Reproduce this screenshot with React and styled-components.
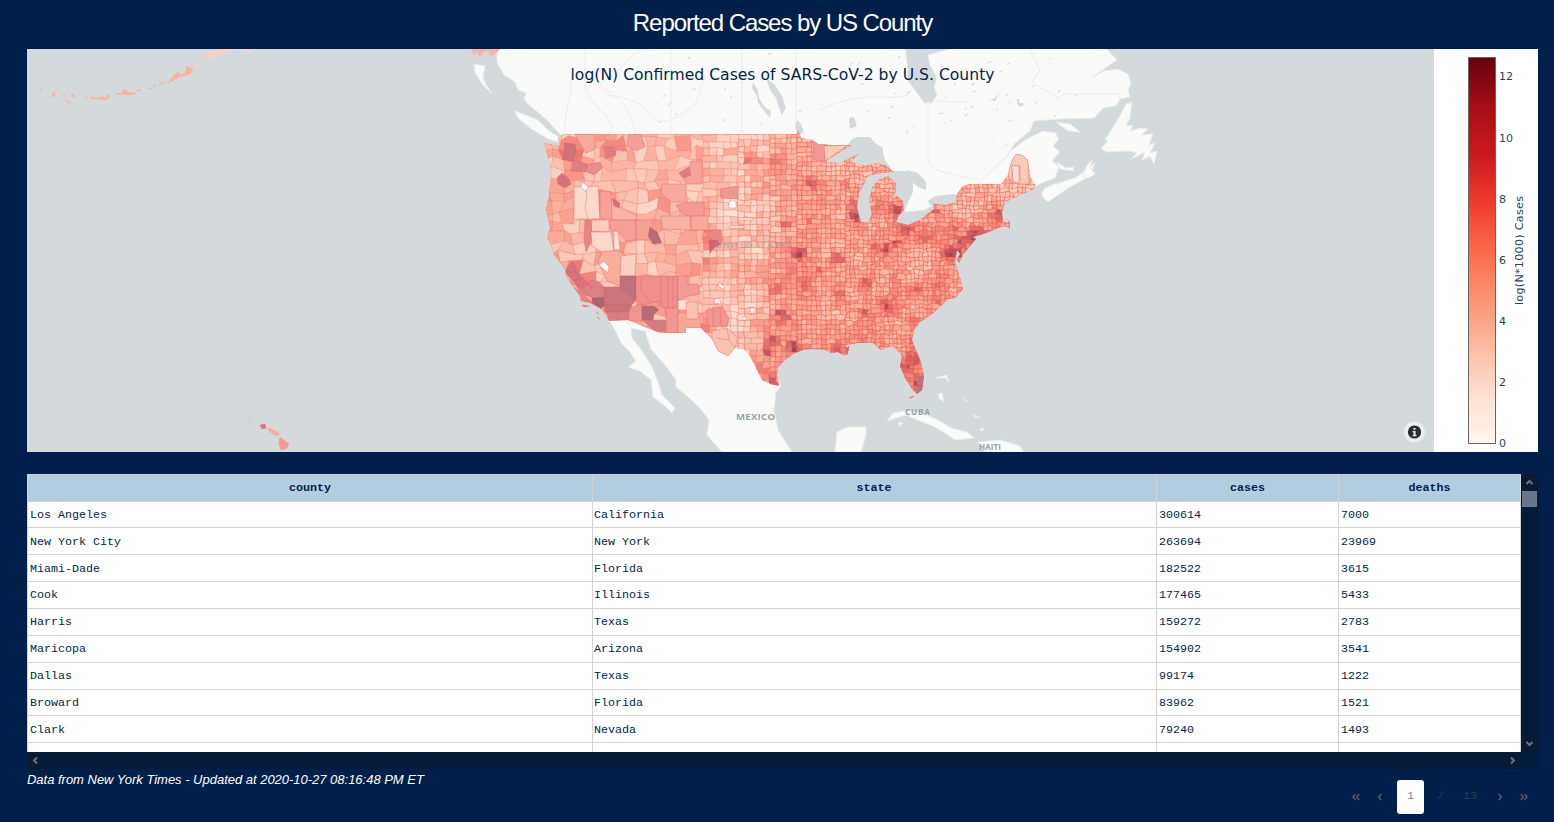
import React from "react";
import styled, { createGlobalStyle } from "styled-components";

const GlobalStyle = createGlobalStyle`
  * { box-sizing: border-box; }
  body { margin: 0; background: #001f4b; overflow: hidden; }
`;

const Page = styled.main`
  display: flex;
  flex-direction: column;
  height: 822px;
  padding: 0 16px 0 27px;
  background: #001f4b;
  color: #fff;
  font-family: "Liberation Sans", Arial, sans-serif;
`;
const Title = styled.h1`
  margin: 0;
  height: 49px;
  line-height: 45px;
  text-align: center;
  font-size: 24px;
  font-weight: 400;
  letter-spacing: -1.07px;
`;
const Chart = styled.section`
  display: flex;
  flex: none;
  height: 403px;
  margin-bottom: 22px;
  background: #fff;
`;
const MapSvg = styled.svg`
  display: block;
  width: 1407px;
  height: 403px;
  background: #d4dadc;
`;
const LegendSvg = styled.svg`
  display: block;
  width: 104px;
  height: 403px;
`;
const ChartText = styled.text`
  font-family: Verdana, "DejaVu Sans", sans-serif;
  font-size: ${(p) => p.$size}px;
  fill: ${(p) => p.$color || "#2a3f5f"};
`;
const PlaceLabel = styled.text`
  font-family: "Open Sans", sans-serif;
  font-weight: 700;
  font-size: ${(p) => p.$size}px;
  fill: #93a1ac;
  opacity: ${(p) => p.$opacity || 1};
`;
const TableArea = styled.section`
  display: grid;
  grid-template-columns: 1494px 17px;
  grid-template-rows: 278px 17px;
  flex: none;
`;
const Table = styled.div`
  overflow: hidden;
  background: #fff;
  color: #001f4b;
  border-right: 1px solid #d3d3d3;
  font-family: "Courier New", "Liberation Mono", monospace;
  font-size: 11.67px;
`;
const Cell = styled.div`
  border-top: 1px solid #d3d3d3;
  border-left: 1px solid #d3d3d3;
  padding: 0 2px;
  white-space: pre;

  &:nth-child(2) {
    padding-left: 1px;
  }
`;
const Row = styled.div`
  display: grid;
  grid-template-columns: 565px 564px 182px 182px;
  height: ${(p) => p.$height}px;
  line-height: ${(p) => p.$line || 27}px;
  background: ${(p) => (p.$head ? "#b3cde0" : "#fff")};
  font-weight: ${(p) => (p.$head ? 700 : 400)};
  text-align: ${(p) => (p.$head ? "center" : "left")};
  overflow: hidden;
`;
const VerticalBar = styled.div`
  display: flex;
  flex-direction: column;
  background: #061a39;
`;
const HorizontalBar = styled.div`
  display: flex;
  justify-content: space-between;
  background: #061a39;
`;
const Corner = styled.div`
  background: #041c40;
`;
const BarButton = styled.div`
  display: flex;
  align-items: center;
  justify-content: center;
  width: 17px;
  height: 17px;
  background: #0a1934;
`;
const Thumb = styled.div`
  height: 16px;
  margin: 0 1px;
  background: #6a768b;
`;
const Spacer = styled.div`
  flex: 1;
`;
const Footer = styled.footer`
  display: flex;
  justify-content: space-between;
  height: 53px;
`;
const Source = styled.em`
  font-size: 13px;
  line-height: 22px;
  letter-spacing: -0.015px;
  white-space: nowrap;
`;
const Pager = styled.nav`
  display: flex;
  align-items: center;
  height: 34px;
  margin: 11px 2px 0 0;
  color: #383c43;
  font-family: "Courier New", "Liberation Mono", monospace;
  font-size: 11.67px;
`;
const PageButton = styled.span`
  display: flex;
  align-items: center;
  justify-content: center;
  width: 24px;
  padding-bottom: 1px;
`;
const CurrentPage = styled.span`
  width: 27px;
  height: 34px;
  margin: 0 5px;
  border-radius: 3px;
  background: #fff;
  color: #858585;
  line-height: 32px;
  text-align: center;
`;
const PageSlash = styled.span`
  width: 23px;
  padding-bottom: 2px;
  text-align: center;
`;
const PageTotal = styled.span`
  width: 36px;
  padding-bottom: 2px;
  text-align: center;
`;

const rows = [
  ["Los Angeles", "California", "300614", "7000"],
  ["New York City", "New York", "263694", "23969"],
  ["Miami-Dade", "Florida", "182522", "3615"],
  ["Cook", "Illinois", "177465", "5433"],
  ["Harris", "Texas", "159272", "2783"],
  ["Maricopa", "Arizona", "154902", "3541"],
  ["Dallas", "Texas", "99174", "1222"],
  ["Broward", "Florida", "83962", "1521"],
  ["Clark", "Nevada", "79240", "1493"],
  ["", "", "", ""],
];
const rowHeights = [26, 27, 27, 27, 27, 27, 27, 26, 27, 27];
const rowLines = [27, 29, 29, 27, 27, 27, 27, 27, 29, 27];

const usOutline =
  "M563 134H797L798 130 801 138 812 140 818 144 832 145 852 145 840 152 825 162 840 163 850 158 858 154 851 162 865 166 875 163 885 165 894 172 881 173 870 175 860 184 855 189 866 180 859 193 857 208 861 222 868 223 872 214 869 200 872 188 878 180 888 176 896 183 896 191 892 199 897 196 903 201 904 210 899 215 896 222 908 225 920 220 934 209 933 204 945 205 956 202 957 194 962 187 969 184 1001 184 1008 175 1011 162 1016 154 1022 155 1028 160 1030 177 1035 185 1034 189 1020 195 1009 200 1004 205 1002 213 1003 222 1009 223 1007 219 1010 222 1010 228 1004 226 996 229 985 232 979 235 973 237 976 239 971 245 967 250 963 255 959 263 957 259 960 254 957 250 955 262 958 272 961 280 963 289 955 298 948 299 943 304 932 314 920 322 914 330 912 340 916 350 921 362 924 376 922 390 917 394 912 389 905 378 900 366 902 357 899 352 893 346 886 348 881 350 873 343 858 343 845 345 849 350 844 356 838 352 831 353 825 350 812 349 803 350 795 353 785 360 778 367 777 376 779 386 771 384 762 380 757 370 750 356 744 349 735 348 728 356 718 351 712 339 701 328H686V333H660L628 320 609 321 605 314 600 308 592 304 581 301 580 296 572 285 567 278 565 270 559 261 554 255 550 243 547 238 550 228 546 210 549 196 551 175 549 160 544 143 560 146 558 138Z";

const land = [
  "M497 40V62L504 75 509 78 515 82 518 90 526 93 524 99 528 104 540 114 548 121 553 127 562 136 600 180H850L895 190 905 212 925 210 934 205 960 202 1010 190 1034 187 1042 183 1055 178 1059 166 1052 161 1060 152 1053 146 1059 139 1056 133 1043 131 1025 140 1012 150 1000 163 1008 155 1015 143 1030 131 1034 121 1060 119 1094 118 1103 108 1116 106 1120 99 1130 97 1128 90 1131 84 1128 74 1117 69 1103 71 1093 77 1105 68 1117 60 1103 45 1101 40H950V49L928 55 930 65 937 78 934 87 937 95 932 103 924 103 915 90 907 80 908 70 905 49V40Z",
  "M474 64L485 66 483 78 487 86 492 94 483 85 475 73Z",
  "M515 111L528 116 538 120 548 130 557 136 562 143 548 139 530 128 518 118Z",
  "M1042 193L1045 188 1055 184 1075 178 1089 168 1095 163 1090 176 1070 187 1058 195 1048 202 1042 196Z",
  "M1057 162L1066 168 1074 167 1073 171 1060 169Z",
  "M1082 177L1087 165 1092 160 1090 168 1095 174 1088 178Z",
  "M1056 122L1070 124 1080 132 1068 131Z",
  "M1132 102L1126 104 1117 121 1105 140 1108 141 1101 148 1106 152 1130 151 1137 153 1131 159 1145 152 1142 160 1150 156 1154 164 1157 151 1150 153 1155 143 1149 145 1153 134 1141 135 1148 129 1141 128 1130 131 1133 125 1126 126 1130 118Z",
  "M609 320L630 318 632 338 640 348 651 365 658 382 662 395 675 408 672 413 664 405 653 397 651 380 640 371 628 367 636 361 630 352 621 343 616 332Z",
  "M626 319L700 320 760 345 781 386 776 392 774 410 778 430 792 452H722L707 435 709 420 700 408 688 397 676 387 676 380 665 365 651 349 645 331 631 328Z",
  "M835 452L837 432 848 427 866 427 866 435 861 452Z",
  "M887 421L893 413 905 411 922 413 938 420 951 428 967 432 974 438 955 440 945 433 933 426 917 420 906 415Z",
  "M978 442L1000 440 1020 446 1024 452H985Z",
  "M938 394L942 393 944 402 939 398Z",
  "M935 378L947 375 949 383 946 378Z",
  "M963 398L968 402 965 400ZM973 414L980 418 975 417ZM979 429L985 428 982 431Z",
  "M898 422L903 423 900 427Z",
];

const lakes = [
  "M822 163L845 148 852 139 858 137 870 137 875 143 883 148 883 152 885 160 891 168 880 178 830 180Z",
  "M852 172H898V200L880 226H856Z",
  "M880 171L905 171 913 180 913 192 908 202 904 212 880 212Z",
  "M906 170L918 173 926 182 926 190 918 187 908 178Z",
  "M894 224L912 215 926 213 934 207 937 214 908 232Z",
  "M928 201L935 196 955 194 961 199 950 207 930 205Z",
  "M766 78L774 84 782 96 786 108 782 115 778 105 776 98 770 90Z",
  "M753 82L758 90 759 98 764 106 771 112 770 118 765 112 758 103 757 96 752 88Z",
  "M797 120L801 124 804 132 799 135 795 127Z",
  "M849 119L854 117 857 126 850 129Z",
  "M989 99L994 99 1000 92 995 101Z",
  "M1017 99L1019 99 1019 103 1023 103 1024 105 1020 107 1017 104Z",
];

const canadaLines =
  "M585 49V75M565 62Q576 70 568 105T571 134M586 70Q580 92 600 110T607 134M598 85L612 93 628 110 636 134M671 49V134M742 49V134M796 49V134M600 84Q620 70 628 60T646 49M607 95Q640 98 650 115T695 105L705 75M820 110Q850 95 880 97T910 91M928 101V160Q932 170 946 173T978 180M978 184L1002 161M936 101L970 102M1030 49L1040 70 1032 82 1058 98 1064 94 1119 94 1120 101";

const fract = (n) => n - Math.floor(n);
const hash = (x, y, k = 0) =>
  fract(Math.sin(x * 127.1 + y * 311.7 + k * 74.7) * 43758.5453);

const metros = [
  [568, 150, 6, 0.4], [580, 165, 8, 0.2], [562, 180, 7, 0.4], [573, 270, 7, 0.35],
  [583, 282, 9, 0.3], [655, 236, 5, 0.5], [714, 242, 8, 0.36], [811, 184, 6, 0.5],
  [857, 216, 7, 0.55], [855, 205, 7, 0.38], [895, 211, 7, 0.48], [976, 235, 8, 0.6],
  [1000, 214, 9, 0.42], [963, 243, 8, 0.38], [950, 253, 8, 0.46], [887, 306, 7, 0.42],
  [920, 384, 9, 0.44], [903, 368, 9, 0.36], [913, 358, 8, 0.34], [911, 341, 5, 0.36],
  [780, 317, 6, 0.5], [794, 348, 6, 0.56], [767, 352, 6, 0.45], [773, 340, 6, 0.4],
  [837, 349, 8, 0.3], [866, 284, 6, 0.36], [917, 292, 7, 0.32], [935, 285, 9, 0.24],
  [835, 257, 6, 0.46], [799, 254, 6, 0.38], [886, 250, 6, 0.4], [897, 242, 5, 0.36],
  [908, 229, 7, 0.28], [873, 245, 5, 0.42], [925, 237, 6, 0.32], [840, 294, 6, 0.4],
  [935, 212, 5, 0.3], [607, 151, 7, 0.42], [613, 201, 6, 0.38], [685, 172, 6, 0.35],
  [701, 328, 7, 0.35], [772, 382, 8, 0.35], [758, 366, 7, 0.35], [750, 160, 6, 0.38],
  [778, 160, 6, 0.34], [858, 342, 8, 0.22], [805, 282, 6, 0.32], [775, 290, 6, 0.3],
  [732, 152, 5, 0.22], [745, 267, 5, 0.3], [841, 278, 10, 0.08], [570, 205, 8, 0.15],
  [786, 223, 5, 0.32], [810, 220, 5, 0.26], [739, 292, 6, 0.25], [708, 264, 6, 0.2],
  [846, 185, 5, 0.24], [876, 208, 5, 0.28], [820, 272, 5, 0.25], [895, 277, 5, 0.28],
  [865, 311, 5, 0.28], [938, 300, 5, 0.24], [955, 230, 6, 0.2], [912, 320, 5, 0.2],
];
const stops = [
  [0, 255, 246, 240], [0.2, 253, 224, 211], [0.35, 252, 202, 184], [0.5, 250, 169, 149],
  [0.65, 242, 136, 125], [0.82, 210, 102, 106], [1, 157, 70, 88],
];
const ramp = (value) => {
  const v = Math.max(0, Math.min(1, value));
  const i = Math.max(1, stops.findIndex((s) => s[0] >= v));
  const a = stops[i - 1];
  const b = stops[i];
  const t = (v - a[0]) / (b[0] - a[0]);
  return `rgb(${[1, 2, 3].map((c) => Math.round(a[c] + (b[c] - a[c]) * t)).join(",")})`;
};
const smooth = (x, y, s) => {
  const ix = Math.floor(x / s);
  const iy = Math.floor(y / s);
  const fx = x / s - ix;
  const fy = y / s - iy;
  const top = hash(ix, iy, 5) * (1 - fx) + hash(ix + 1, iy, 5) * fx;
  const bottom = hash(ix, iy + 1, 5) * (1 - fx) + hash(ix + 1, iy + 1, 5) * fx;
  return top * (1 - fy) + bottom * fy;
};
const clamp01 = (n) => Math.max(0, Math.min(1, n));
const density = (x, y) => {
  const intoPlains = clamp01((x - 700) / 25);
  const intoEast = clamp01((x - 732) / 56);
  const east = 0.46 + clamp01((y - 190) / 110) * 0.06;
  let v = 0.43 - intoPlains * 0.12;
  v += intoEast * (east - v);
  if (x > 940 && y < 212) v = 0.38;
  v -= 0.2 * Math.exp(-((x - 921) ** 2 + (y - 258) ** 2) / 150);
  v += (hash(x, y, 9) - 0.5) * (x < 770 ? 0.28 : 0.22) + (smooth(x, y, 23) - 0.5) * 0.16;
  metros.forEach(([mx, my, r, amount]) => {
    v += amount * Math.exp(-((x - mx) ** 2 + (y - my) ** 2) / (r * r));
  });
  return v;
};

// Counties grow smaller from the mountain states to the Atlantic.
const bands = [
  { x: 540, columns: 16, w: 10.6, h: 10.4, jitter: 0.34, merge: 0.34, stroke: "#ef6a58", opacity: 0.32 },
  { x: 709.6, columns: 5, w: 7, h: 6.8, jitter: 0.14, merge: 0.24, stroke: "#f06350", opacity: 0.32 },
  { x: 744.6, columns: 5, w: 6.2, h: 6, jitter: 0.16, merge: 0.2, stroke: "#f15440", opacity: 0.35 },
  { x: 775.6, columns: 5, w: 5.3, h: 5.2, jitter: 0.14, merge: 0.16, stroke: "#f24633", opacity: 0.38 },
  { x: 802.1, columns: 10, w: 4.8, h: 4.8, jitter: 0.16, merge: 0.14, stroke: "#f23b28", opacity: 0.42 },
  { x: 850.1, columns: 44, w: 4.3, h: 4.3, jitter: 0.3, merge: 0.16, stroke: "#f23b28", opacity: 0.42 },
];
const counties = [];
bands.forEach((band, k) => {
  const vertex = (i, j) => [
    band.x + i * band.w + (hash(i, j, k + 20) - 0.5) * 2 * band.jitter * band.w,
    128 + j * band.h + (hash(i, j, k + 40) - 0.5) * 2 * band.jitter * band.h,
  ];
  for (let j = 0; j * band.h < 272; j += 1) {
    const first = k === 0 || hash(j, k, 80) < 0.35 ? 0 : -1;
    for (let i = first === 0 && k > 0 ? -1 : first; i < band.columns; i += 1) {
      const wide = i < band.columns - 1 && hash(i, j, k + 60) < band.merge;
      const points = wide
        ? [vertex(i, j), vertex(i + 1, j), vertex(i + 2, j), vertex(i + 2, j + 1), vertex(i + 1, j + 1), vertex(i, j + 1)]
        : [vertex(i, j), vertex(i + 1, j), vertex(i + 1, j + 1), vertex(i, j + 1)];
      const x = band.x + (i + 0.5) * band.w;
      const y = 128 + (j + 0.5) * band.h;
      counties.push({
        d: `M${points.map((p) => p.map((n) => n.toFixed(1)).join(" ")).join("L")}Z`,
        fill: ramp(density(x, y)),
        stroke: band.stroke,
        opacity: band.opacity,
      });
      if (wide) i += 1;
    }
  }
});

const largeCounties = [
  ["M574 187L598 186 600 219H574Z", "#fbdacd"],
  ["M585 186L587 197 585 208 588 219", "none"],
  ["M582 182L588 186 586 192 581 187Z", "#fffaf7"],
  ["M600 191L611 192 614 219H600Z", "#f7a198"],
  ["M611 193L620 207 636 215 637 220H612Z", "#f9b4a4"],
  ["M609 220H636V240L626 241 618 231H611Z", "#f6a196"],
  ["M592 220H609V232L591 231Z", "#fbcdbd"],
  ["M585 220H591L592 240 586 252 584 240Z", "#e88682"],
  ["M636 220H653V240H636Z", "#f7a297"],
  ["M591 232H611L614 251 602 252 592 246Z", "#fbd8ca"],
  ["M614 231L618 232 620 250 614 250Z", "#fde5dc"],
  ["M602 252L617 250 627 256 621 265 620 286 607 281 598 261Z", "#f9ae9c"],
  ["M604 261L609 267 608 273 599 265Z", "#fffcfa"],
  ["M621 256L636 254 635 276H620Z", "#fbd1c1"],
  ["M564 143L575 144 576 151 573 162 562 159 565 152Z", "#cf737b"],
  ["M573 160L587 164 586 172 571 171Z", "#dd8083"],
  ["M587 165L600 162 602 168 594 175 587 172Z", "#e98c8a"],
  ["M575 134H595V149L586 153 579 142Z", "#f7a99b"],
  ["M604 147L614 147 616 155 606 158Z", "#df7f84"],
  ["M612 198L620 203 619 208 614 206Z", "#cf747c"],
  ["M557 178L562 173 568 178 571 184 565 188 558 184Z", "#d5757b"],
  ["M629 134H640L645 146 637 151 627 146Z", "#f4a098"],
  ["M679 173L689 167 691 175 683 178Z", "#dd7d82"],
  ["M691 161H702V184H686L684 178 691 175 689 167Z", "#f6a399"],
  ["M662 184H686V202L671 202 661 193Z", "#f8aa9c"],
  ["M676 205L690 202H704V216L690 217 682 213Z", "#f49c94"],
  ["M661 216H690L691 230 662 229Z", "#f9b3a2"],
  ["M691 216H708V230H691Z", "#f9aa9b"],
  ["M704 231L721 230 722 242 712 240Z", "#eb8885"],
  ["M709 241L716 240 721 244 714 248 710 253Z", "#d4646c"],
  ["M720 189L738 186V199L721 198Z", "#ef9890"],
  ["M650 227L657 232 662 243 653 244 648 236Z", "#b86b78"],
  ["M635 278L642 276H678V309L660 307 658 301 643 305 634 298Z", "#ee908d"],
  ["M641 278V292L647 298 651 303", "none"],
  ["M661 276V304M668 276V308M673 276V308", "none"],
  ["M678 276H688V284L698 284 700 294 689 296 678 300Z", "#f39c95"],
  ["M678 300H689V310H678Z", "#fde2d8"],
  ["M620 276H636V300L632 302 620 290Z", "#bc727b"],
  ["M604 287H620L634 300V303L631 305H604Z", "#cb767e"],
  ["M604 305H632L629 313 605 312Z", "#c9747c"],
  ["M606 312H629V320L609 321Z", "#d97f84"],
  ["M618 312V320", "none"],
  ["M579 291L592 280 599 282 604 287 603 298 592 298Z", "#dc8187"],
  ["M590 287H604M582 288L588 296M588 283L592 290", "none"],
  ["M592 298L604 297V306L600 309 592 303Z", "#a96671"],
  ["M570 285L579 291 594 303 580 301 573 292Z", "#e68686"],
  ["M568 265L573 262 580 276 588 283 579 290 573 280 565 273Z", "#d5757c"],
  ["M572 266L577 276M567 272L576 272M574 280L582 279", "none"],
  ["M632 307L642 304V321H628Z", "#ef9690"],
  ["M642 306H654L659 310 654 314 653 320H642Z", "#b56c76"],
  ["M642 320H666V332L655 331Z", "#d67d83"],
  ["M666 308H678V333H667Z", "#f29790"],
  ["M678 313H701V328H686V333H678Z", "#f8a797"],
  ["M686 302H698V319H686Z", "#fbc2af"],
  ["M706 310L722 306 729 318 727 327 708 326Z", "#f29790"],
  ["M713 306V326M720 307L721 326", "none"],
  ["M712 331L727 328 738 338 735 348 728 356 718 351 712 339Z", "#fbc3af"],
  ["M727 328L729 340 735 348M716 338L729 340", "none"],
  ["M729 201H736V208H729Z", "#ffffff"],
  ["M718 282L724 286 725 290 719 287ZM714 299L719 298 721 303 715 304ZM750 308H755V313H750ZM742 317H746V320H742Z", "#fff5ef"],
  ["M738 218H753V220H738ZM729 226H744V228H729Z", "#fff0e7"],
  ["M813 141L825 144V162L813 159Z", "#f19892"],
  ["M824 146L848 145 825 161Z", "#fbcab9"],
  ["M1008 175L1011 162 1016 154 1022 155 1028 160 1029 184H1020V166H1012V183Z", "#fbcbb9"],
  ["M1012 166H1019V183L1013 181Z", "#fde1d6"],
  ["M916 377L923 375V385H917ZM917 386H923L921 393 917 394Z", "#ba737b"],
];

const islands = [
  ["M40 89H42V90H40ZM52 94L55 92 55 96 52 97ZM63 95H65V96H63ZM64 99L71 103 68 103ZM72 94H74V97H72ZM85 97H87V98H85Z", "#f8b4a1"],
  ["M91 96L96 98 101 97 103 96 105 98 109 94 110 97 105 100 97 99 92 99Z", "#f8b3a0"],
  ["M115 94L122 93 124 89 128 92 136 94 129 95ZM137 90H141V91H137ZM149 88H151V89H149ZM153 86L156 85 155 87ZM159 84L164 82 163 84Z", "#f8b09c"],
  ["M168 83L174 75 178 72 181 75 185 73 187 66 193 69 190 74 179 77Z", "#f8b09c"],
  ["M194 65L200 63 199 66ZM204 60L207 54 217 50 217 56ZM217 49H232L228 53 218 54ZM239 49H242V50H239ZM243 52L246 49H251L249 53 247 51Z", "#fbd1c0"],
  ["M243 423L246 421 244 424ZM248 420L252 420 250 423Z", "#f5c3b5"],
  ["M260 425L265 424 266 428 262 429Z", "#d8767c"],
  ["M268 428L272 429 280 434 276 436 269 431Z", "#f9aa99"],
  ["M280 437L289 444 287 448 281 450 279 444Z", "#f69c8f"],
  ["M472 49H500L496 53 491 56 488 50 483 52 480 56 476 51 474 55Z", "#f9b5a2"],
  ["M582 305L589 306 584 307ZM596 312L599 314ZM597 317L600 319Z", "#e97974"],
  ["M909 398L914 396 911 398Z", "#ec6f65"],
  ["M846 350L849 346 847 355ZM974 234L983 231 993 230 980 235Z", "#d9636a"],
];

const specks = Array.from({ length: 90 }, (_, i) => {
  const y = 54 + hash(i, 3) * 92;
  const x = 660 + hash(i, 8) * 420;
  return { x, y, rx: 0.5 + hash(i, 4) * 2, angle: -50 + hash(i, 6) * 30 };
}).filter((s) => !(s.y > 125 && s.x < 850));

function MapPanel() {
  return (
    <MapSvg viewBox="27 49 1407 403" role="img" aria-label="Confirmed cases by county">
      <defs>
        <clipPath id="us"><path d={usOutline} /></clipPath>
      </defs>
      {land.map((d) => <path key={d} d={d} fill="#fafaf8" stroke="#e9ecec" strokeWidth="1" />)}
      <path d={canadaLines} fill="none" stroke="#f0eaec" strokeWidth="1" />
      {specks.map((s) => (
        <ellipse key={s.x} rx={s.rx} ry="0.7" fill="#d9dfe1" transform={`translate(${s.x} ${s.y}) rotate(${s.angle})`} />
      ))}
      {lakes.map((d) => <path key={d} d={d} fill="#d4dadc" />)}
      <g clipPath="url(#us)">
        {counties.map((c) => (
          <path key={c.d} d={c.d} fill={c.fill} stroke={c.stroke} strokeOpacity={c.opacity} strokeWidth="0.8" />
        ))}
        {largeCounties.map(([d, fill]) => (
          <path key={d} d={d} fill={fill} stroke="#e35450" strokeOpacity="0.4" strokeWidth="0.9" />
        ))}
        <path d={usOutline} fill="none" stroke="#ec7768" strokeOpacity="0.45" />
      </g>
      {islands.map(([d, fill]) => <path key={d} d={d} fill={fill} stroke={fill} strokeWidth="0.6" />)}
      <PlaceLabel x="715" y="248" $size={9} $opacity={0.5} textLength="75">UNITED STATES</PlaceLabel>
      <PlaceLabel x="736" y="420" $size={9.5} textLength="39">MEXICO</PlaceLabel>
      <PlaceLabel x="905" y="415" $size={8.2} textLength="25">CUBA</PlaceLabel>
      <PlaceLabel x="979" y="450" $size={8} textLength="22">HAITI</PlaceLabel>
      <ChartText x="570.5" y="80" $size={15.6} $color="#001f4b" textLength="424">
        log(N) Confirmed Cases of SARS-CoV-2 by U.S. County
      </ChartText>
      <circle cx="1414.5" cy="432" r="10.5" fill="#fff" fillOpacity="0.55" />
      <circle cx="1414.5" cy="432" r="6.6" fill="#2c2c2c" />
      <path d="M1413.4 428h2.2v1.8h-2.2zM1412.6 431h3v4h.9v1.2h-3.9V435h.9v-2.8h-.9z" fill="#e4e6e7" />
    </MapSvg>
  );
}

const legendStops = [
  "rgb(103,0,13)", "rgb(165,15,21)", "rgb(203,24,29)", "rgb(239,59,44)", "rgb(251,106,74)",
  "rgb(252,146,114)", "rgb(252,187,161)", "rgb(254,224,210)", "rgb(255,245,240)",
];
const legendOffsets = [0, 0.125, 0.25, 0.375, 0.5, 0.625, 0.75, 0.875, 1];

function Legend() {
  return (
    <LegendSvg viewBox="1434 49 104 403">
      <defs>
        <linearGradient id="reds" x1="0" x2="0" y1="0" y2="1">
          {legendStops.map((color, i) => <stop key={color} offset={legendOffsets[i]} stopColor={color} />)}
        </linearGradient>
      </defs>
      <rect x="1468.5" y="57.5" width="27" height="386" fill="url(#reds)" stroke="#666" />
      {[0, 2, 4, 6, 8, 10, 12].map((tick) => (
        <ChartText key={tick} x="1499" y={447 - tick * 30.55} $size={11} textLength={tick > 9 ? 14 : 7}>{tick}</ChartText>
      ))}
      <ChartText $size={11.2} transform="translate(1523 305) rotate(-90)" textLength="109">log(N*1000) Cases</ChartText>
    </LegendSvg>
  );
}

function Arrow({ angle }) {
  return (
    <svg width="9" height="9" viewBox="-4.5 -4.5 9 9">
      <path d="M-3 1.5L0-1.5L3 1.5" fill="none" stroke="#68717f" strokeWidth="2" transform={`rotate(${angle})`} />
    </svg>
  );
}

function Chevron({ double, right }) {
  return (
    <svg width="10" height="8" viewBox="-5 -4 10 8">
      <path
        d={double ? "M-.5-3L-3 0L-.5 3M3.2-3L.7 0L3.2 3" : "M1.2-3L-1.3 0L1.2 3"}
        fill="none"
        stroke="#555960"
        strokeWidth="1.7"
        transform={right ? "rotate(180)" : undefined}
      />
    </svg>
  );
}

export default function App() {
  return (
    <Page>
      <GlobalStyle />
      <Title>Reported Cases by US County</Title>
      <Chart>
        <MapPanel />
        <Legend />
      </Chart>
      <TableArea>
        <Table>
          <Row $head $height={27}>
            {["county", "state", "cases", "deaths"].map((name) => <Cell key={name}>{name}</Cell>)}
          </Row>
          {rows.map((row, i) => (
            <Row key={row[0]} $height={rowHeights[i]} $line={rowLines[i]}>
              {row.map((value, c) => <Cell key={c}>{value}</Cell>)}
            </Row>
          ))}
        </Table>
        <VerticalBar>
          <BarButton><Arrow angle={0} /></BarButton>
          <Thumb />
          <Spacer />
          <BarButton><Arrow angle={180} /></BarButton>
        </VerticalBar>
        <HorizontalBar>
          <BarButton><Arrow angle={-90} /></BarButton>
          <BarButton><Arrow angle={90} /></BarButton>
        </HorizontalBar>
        <Corner />
      </TableArea>
      <Footer>
        <Source>Data from New York Times - Updated at 2020-10-27 08:16:48 PM ET</Source>
        <Pager>
          <PageButton><Chevron double /></PageButton>
          <PageButton><Chevron /></PageButton>
          <CurrentPage>1</CurrentPage>
          <PageSlash>/</PageSlash>
          <PageTotal>13</PageTotal>
          <PageButton><Chevron right /></PageButton>
          <PageButton><Chevron double right /></PageButton>
        </Pager>
      </Footer>
    </Page>
  );
}
